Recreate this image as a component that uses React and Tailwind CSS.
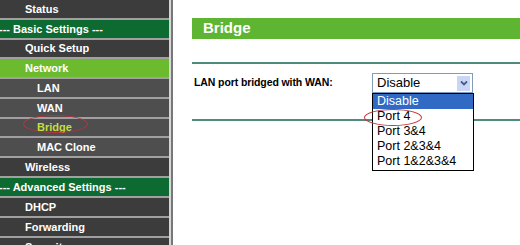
const menu = [
  { label: 'Status', kind: 'top' },
  { label: '--- Basic Settings ---', kind: 'section' },
  { label: 'Quick Setup', kind: 'top', h: 'h-[19px]' },
  { label: 'Network', kind: 'active' },
  { label: 'LAN', kind: 'sub' },
  { label: 'WAN', kind: 'sub' },
  { label: 'Bridge', kind: 'current', h: 'h-[19px]' },
  { label: 'MAC Clone', kind: 'sub' },
  { label: 'Wireless', kind: 'top' },
  { label: '--- Advanced Settings ---', kind: 'section' },
  { label: 'DHCP', kind: 'top' },
  { label: 'Forwarding', kind: 'top' },
  { label: 'Security', kind: 'top' },
]

const rowStyle = {
  top: 'bg-[#3d3c3d] text-white pl-[25px]',
  section: 'bg-[#0d6a31] text-white pl-0 -ml-[1px]',
  active: 'bg-[#6cbb2f] text-white pl-[25px]',
  sub: 'bg-[#4f4e4f] text-white pl-[37px]',
  current: 'bg-[#4f4e4f] text-[#c4de3f] pl-[37px]',
}

function MenuRow({ item }) {
  return (
    <div
      className={`${item.h || 'h-[20px]'} shrink-0 border-b-2 border-[#a0a0a0] flex items-center text-[11px] font-bold whitespace-nowrap ${rowStyle[item.kind]}`}
    >
      {item.kind === 'current' ? (
        <span className="relative">
          {item.label}
          <span className="absolute left-[-14px] top-[-4px] w-[65px] h-[18px] rounded-[50%] border-[1.5px] border-[#b9323e]" />
        </span>
      ) : (
        item.label
      )}
    </div>
  )
}

const options = ['Disable', 'Port 4', 'Port 3&4', 'Port 2&3&4', 'Port 1&2&3&4']

export default function App() {
  return (
    <div
      className="w-[520px] h-[245px] overflow-hidden flex bg-white"
      style={{ fontFamily: '"Liberation Sans", Arial, sans-serif' }}
    >
      <div className="w-[169px] shrink-0 flex flex-col bg-[#3d3c3d]">
        {menu.map((item) => (
          <MenuRow key={item.label} item={item} />
        ))}
      </div>
      <div className="w-[2px] shrink-0 bg-[#d6d6d6]" />
      <div className="w-[2px] shrink-0 bg-[#77777a]" />

      <div className="flex-1 pl-[19px] pt-[18px]">
        <div className="h-[21px] bg-[#5eb532] flex items-center pl-[11px] text-white text-[15px] font-bold">
          Bridge
        </div>

        <div className="mt-[23px] h-[2px] bg-[#4f8a7b]" />

        <div className="mt-[9px] h-[20px] flex items-center">
          <div className="w-[180px] shrink-0 pl-[2px] text-[10.5px] font-bold text-black tracking-[-0.1px]">
            LAN port bridged with WAN:
          </div>

          <div className="relative w-[101px] h-[20px] border border-[#7f9db9] bg-white flex items-center">
            <span className="pl-[4px] text-[13px] text-black flex-1">Disable</span>
            <div className="w-[15px] h-[17px] mr-[1px] bg-[#c9d6f6] border border-white flex items-center justify-center">
              <svg width="8" height="6" viewBox="0 0 8 6">
                <path d="M1 1.5 L4 4.5 L7 1.5" fill="none" stroke="#4a5d88" strokeWidth="1.8" />
              </svg>
            </div>

            <div className="absolute left-[-1px] top-[19px] w-[102px] border border-black bg-white z-10">
              {options.map((opt, i) => (
                <div
                  key={opt}
                  className={`h-[15px] pl-[4px] flex items-center text-[12.5px] leading-none ${
                    i === 0 ? 'bg-[#316ac5] text-white' : 'text-black'
                  }`}
                >
                  {opt}
                </div>
              ))}
              <div className="h-[1px]" />
              <span className="absolute left-[-9px] top-[15px] w-[58px] h-[17px] rounded-[50%] border-[1.5px] border-[#c8343f]" />
            </div>
          </div>
        </div>

        <div className="mt-[26px] h-[2px] bg-[#4f8a7b]" />
      </div>
    </div>
  )
}
